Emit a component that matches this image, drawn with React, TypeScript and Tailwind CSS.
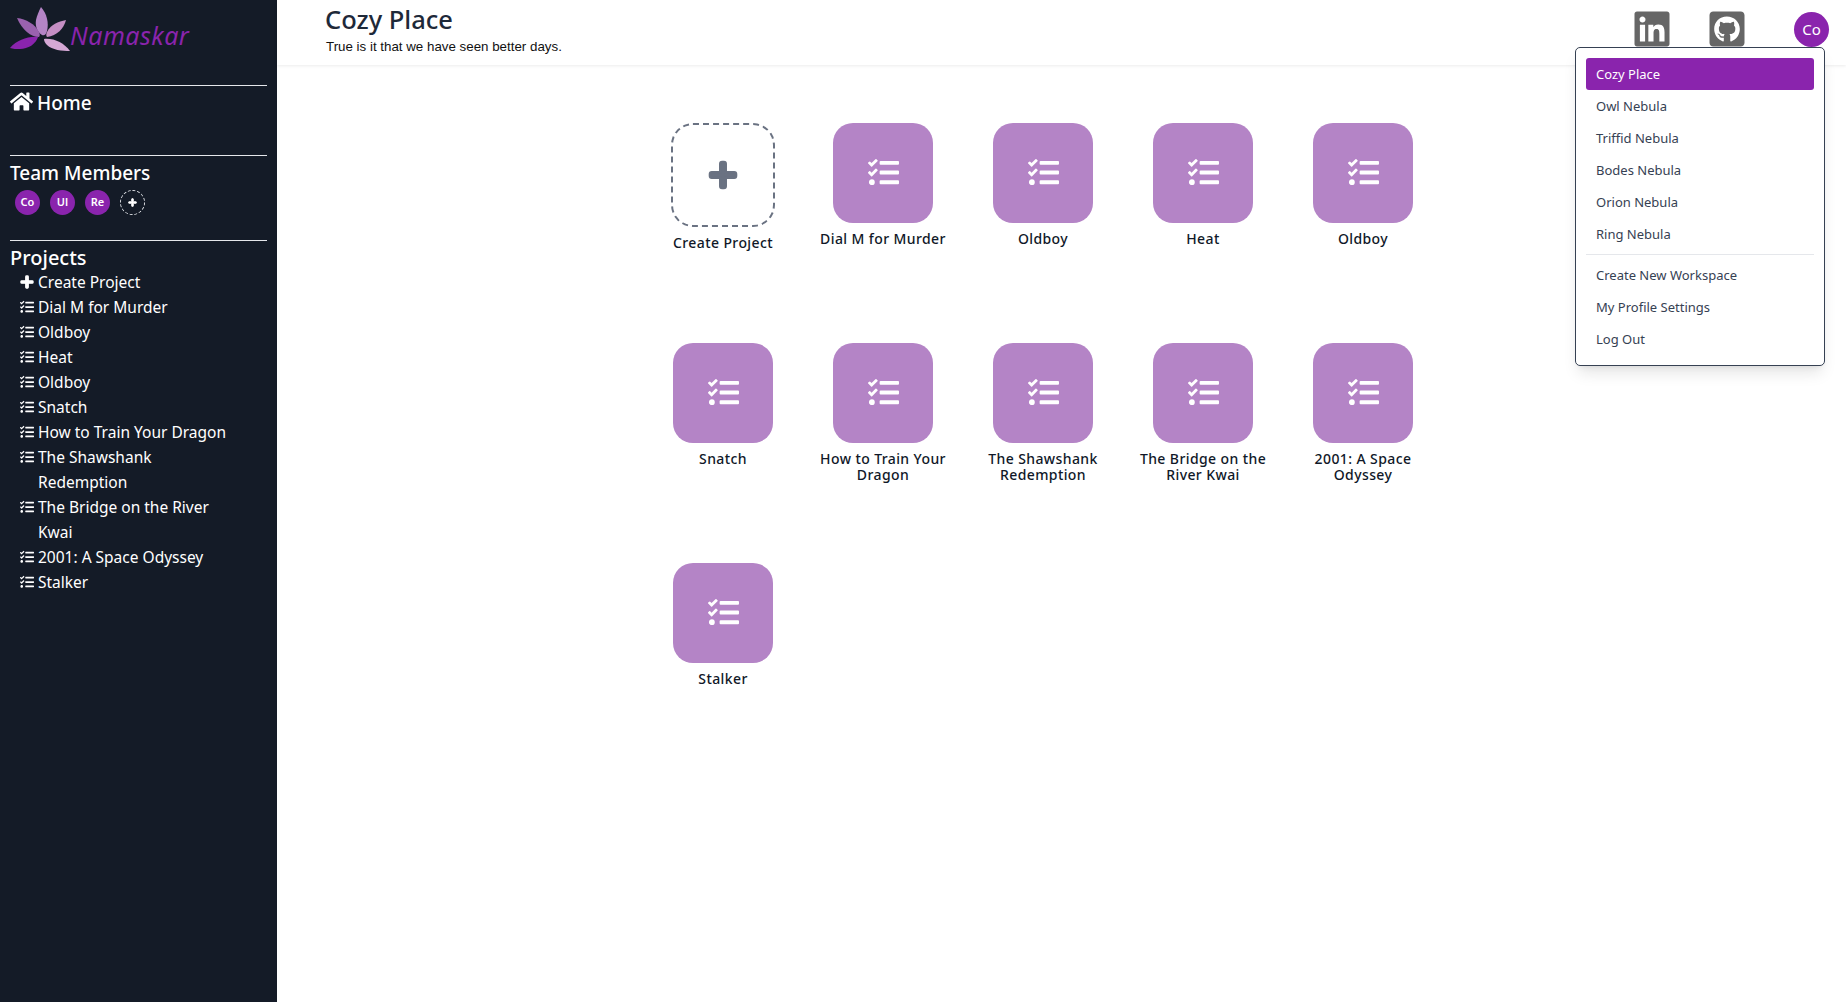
import { FaGithubSquare, FaHome, FaLinkedin, FaPlus, FaTasks } from 'react-icons/fa';

const sidebarProjects = [
  'Dial M for Murder',
  'Oldboy',
  'Heat',
  'Oldboy',
  'Snatch',
  'How to Train Your Dragon',
  'The Shawshank Redemption',
  'The Bridge on the River Kwai',
  '2001: A Space Odyssey',
  'Stalker',
];

const workspaces = ['Owl Nebula', 'Triffid Nebula', 'Bodes Nebula', 'Orion Nebula', 'Ring Nebula'];
const accountLinks = ['Create New Workspace', 'My Profile Settings', 'Log Out'];

const Logo = () => (
  <svg viewBox="0 0 60 44" className="w-[60px] h-[44px] shrink-0">
    <path d="M31 0 C37 7 39 16 37 24 C36 28 34 29 32 28 C27 25 25 19 26 13 C27 8 29 4 31 0 Z" fill="#b484c6" />
    <path d="M7 11 C16 12 25 17 29 25 C30 27 30 29 29 30 C21 30 12 23 7 11 Z" fill="#9a62ae" />
    <path d="M56 13 C54 21 47 29 37 30 C36 29 36 27 37 25 C41 17 48 15 56 13 Z" fill="#c58ec4" />
    <path d="M0 41 C7 33 18 29 28 30 C26 37 18 42 10 42 C6 42 3 42 0 41 Z" fill="#8a24ad" />
    <path d="M34 32 C44 31 54 36 60 44 C52 44 42 43 37 38 C35 36 34 34 34 32 Z" fill="#d5a8d5" />
  </svg>
);

const SidebarDivider = () => <div className="h-px bg-gray-200" />;

const MemberBadge = ({ label }: { label: string }) => (
  <div className="w-[25px] h-[25px] rounded-full bg-[#8a24ad] flex items-center justify-center text-[11px] font-semibold text-white">
    {label}
  </div>
);

const ProjectTile = ({ name }: { name: string }) => (
  <div className="flex flex-col items-center">
    <div className="w-[100px] h-[100px] rounded-[20px] bg-[#b484c6] flex items-center justify-center pb-[2px]">
      <FaTasks className="text-white" size={31} />
    </div>
    <div className="w-[140px] mt-[8px] text-center text-[14px] leading-[16px] font-medium tracking-[0.4px] text-gray-900">
      {name}
    </div>
  </div>
);

export default function App() {
  return (
    <div className="h-[1002px] flex bg-white overflow-hidden font-['Noto_Sans',sans-serif]">
      {/* Sidebar */}
      <aside className="w-[277px] shrink-0 bg-[#141b27] text-white px-[10px]">
        <div className="h-[85px] pt-[7px] flex items-start">
          <Logo />
          <span className="mt-[10px] text-[25px] leading-[36px] italic tracking-[0.5px] text-[#8a24ad]">Namaskar</span>
        </div>
        <SidebarDivider />
        <div className="h-[69px] pt-[3px] flex items-start gap-[4px] text-[19px] leading-[28px] font-medium">
          <FaHome size={23} className="mt-[1px]" />
          Home
        </div>
        <SidebarDivider />
        <div className="h-[84px] pt-[3px]">
          <div className="text-[19px] leading-[28px] font-medium">Team Members</div>
          <div className="flex gap-[10px] pl-[5px] mt-[3px]">
            <MemberBadge label="Co" />
            <MemberBadge label="Ul" />
            <MemberBadge label="Re" />
            <div className="w-[25px] h-[25px] rounded-full border border-dashed border-gray-200 flex items-center justify-center">
              <FaPlus size={9} strokeWidth={50} />
            </div>
          </div>
        </div>
        <SidebarDivider />
        <div className="pt-[4px]">
          <div className="text-[20px] leading-[25px] font-medium">Projects</div>
          <ul className="pl-[10px] text-[15.5px] leading-[25px]">
            <li className="flex items-start gap-[4px]">
              <FaPlus size={14} strokeWidth={40} className="mt-[5px] shrink-0" />
              Create Project
            </li>
            {sidebarProjects.map((name, i) => (
              <li key={i} className="flex items-start gap-[4px]">
                <FaTasks size={14} className="mt-[5px] shrink-0" />
                <span className="max-w-[198px]">{name}</span>
              </li>
            ))}
          </ul>
        </div>
      </aside>

      {/* Main area */}
      <div className="relative flex-1 min-w-0">
        <header className="h-[65px] flex justify-between shadow-[0_1px_3px_rgba(0,0,0,0.08)] pl-[48px] pr-[17px]">
          <div className="pt-[3px]">
            <h1 className="text-[25.5px] leading-[32px] font-medium text-gray-800">Cozy Place</h1>
            <p className="ml-[1px] mt-[3px] text-[13.33px] leading-[18px] text-[#111] font-['Liberation_Sans',sans-serif]">
              True is it that we have seen better days.
            </p>
          </div>
          <div className="flex items-start pt-[9px]">
            <FaLinkedin size={40} className="text-[#666]" />
            <FaGithubSquare size={40} className="text-[#666] ml-[35px]" />
            <div className="ml-[47px] mt-[3px] w-[35px] h-[35px] rounded-full bg-[#8a24ad] flex items-center justify-center text-[15px] text-white">
              Co
            </div>
          </div>
        </header>

        {/* Project grid */}
        <main className="w-[800px] ml-[366px] pt-[58px] grid grid-cols-5 auto-rows-[220px] justify-items-center">
          <div className="flex flex-col items-center">
            <div className="w-[104px] h-[104px] rounded-[22px] border-2 border-dashed border-gray-500 flex items-center justify-center">
              <FaPlus size={30} strokeWidth={40} className="text-gray-500" />
            </div>
            <div className="mt-[8px] text-[14px] leading-[16px] font-medium tracking-[0.4px] text-gray-900">Create Project</div>
          </div>
          {sidebarProjects.map((name, i) => (
            <ProjectTile key={i} name={name} />
          ))}
        </main>

        {/* Account dropdown */}
        <div className="absolute left-[1298px] top-[47px] w-[250px] h-[319px] bg-white border border-gray-700 rounded-[5px] shadow-lg p-[10px] text-[13px] leading-[32px] text-gray-700">
          <div className="h-[32px] px-[10px] rounded-[3px] bg-[#8a24ad] text-white">Cozy Place</div>
          {workspaces.map((w) => (
            <div key={w} className="h-[32px] px-[10px]">{w}</div>
          ))}
          <div className="h-px my-[4px] bg-gray-200" />
          {accountLinks.map((l) => (
            <div key={l} className="h-[32px] px-[10px]">{l}</div>
          ))}
        </div>
      </div>
    </div>
  );
}
